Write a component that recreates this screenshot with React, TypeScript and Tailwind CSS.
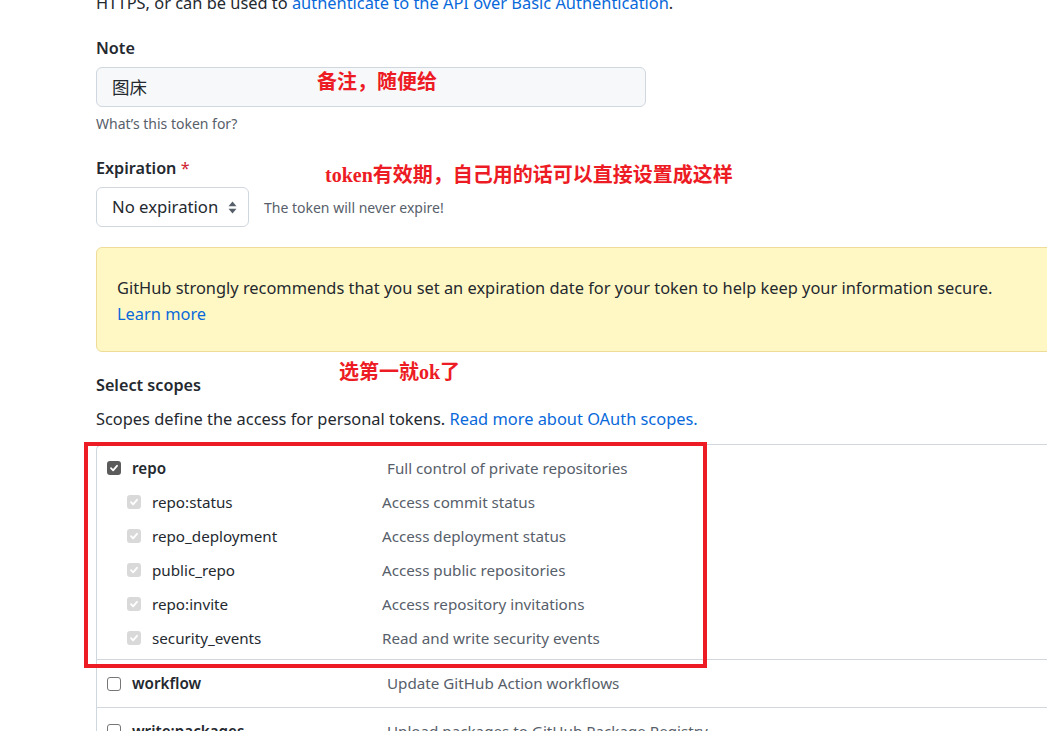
import React from "react";

const sans = { fontFamily: '"Noto Sans", "Noto Sans CJK SC", sans-serif' };

function Check({ kind }: { kind: "on" | "dim" | "off" }) {
  if (kind === "off") {
    return <span className="h-[14px] w-[14px] shrink-0 rounded-[3px] border border-[#767676] bg-white" />;
  }
  return (
    <span
      className={
        "flex h-[14px] w-[14px] shrink-0 items-center justify-center rounded-[3px] " +
        (kind === "on" ? "bg-[#5b5b5b]" : "bg-[#d9d9d9]")
      }
    >
      <svg width="10" height="10" viewBox="0 0 10 10" fill="none">
        <path d="M2 5.2 4.1 7.3 8 2.8" stroke="white" strokeWidth="1.8" strokeLinecap="round" strokeLinejoin="round" />
      </svg>
    </span>
  );
}

const subScopes = [
  ["repo:status", "Access commit status"],
  ["repo_deployment", "Access deployment status"],
  ["public_repo", "Access public repositories"],
  ["repo:invite", "Access repository invitations"],
  ["security_events", "Read and write security events"],
];

function Note({ children, className }: { children: React.ReactNode; className: string }) {
  return (
    <div
      className={"absolute whitespace-nowrap text-[20px] font-bold leading-[20px] text-[#ed1c24] " + className}
      style={{ fontFamily: '"Liberation Serif", "Noto Sans CJK SC", serif' }}
    >
      {children}
    </div>
  );
}

export default function App() {
  return (
    <div className="relative h-[731px] w-[1047px] overflow-hidden bg-white text-[#24292f]" style={sans}>
      <div className="w-[1120px] pl-[96px]">
        <p className="-mt-[9px] text-[16.4px] leading-[24px]">
          HTTPS, or can be used to{" "}
          <a className="text-[#0969da]">authenticate to the API over Basic Authentication</a>.
        </p>

        <div className="mt-[21px] text-[16.2px] font-semibold leading-[24px]">Note</div>
        <div className="mt-[7px] flex h-[40px] w-[550px] items-center rounded-md border border-[#d0d7de] bg-[#f6f8fa] px-[15px] text-[17.5px]">
          图床
        </div>
        <div className="mt-[8px] text-[14px] leading-[18px] text-[#57606a]">What’s this token for?</div>

        <div className="mt-[23px] text-[16.2px] font-semibold leading-[24px]">
          Expiration <span className="font-normal text-[#cf222e]">*</span>
        </div>
        <div className="mt-[7px] flex items-center gap-[15px]">
          <div className="flex h-[40px] w-[153px] items-center justify-between rounded-md border border-[#d0d7de] bg-white pl-[15px] pr-[11px] text-[16.7px]">
            <span>No expiration</span>
            <svg width="9" height="13" viewBox="0 0 9 13">
              <path d="M4.5 0.5 8.5 5.3H0.5Z" fill="#57606a" />
              <path d="M4.5 12.5 0.5 7.7H8.5Z" fill="#57606a" />
            </svg>
          </div>
          <span className="text-[14px] text-[#57606a]">The token will never expire!</span>
        </div>

        <div className="mt-[20px] h-[105px] rounded-md border border-[#eedc98] bg-[#fff8c5] pl-[20px] pt-[27px] text-[16.4px] leading-[26px]">
          <p>GitHub strongly recommends that you set an expiration date for your token to help keep your information secure.</p>
          <a className="text-[#0969da]">Learn more</a>
        </div>

        <div className="mt-[21px] text-[16.2px] font-semibold leading-[24px]">Select scopes</div>
        <p className="mt-[10px] text-[16.4px] leading-[24px]">
          Scopes define the access for personal tokens.{" "}
          <a className="text-[#0969da]">Read more about OAuth scopes.</a>
        </p>

        <div className="mt-[13px] rounded-tl-md border-l border-t border-[#d0d7de] text-[15.2px]">
          <div className="border-b border-[#d0d7de] pb-[4px] pl-[10px] pt-[6px]">
            <div className="flex h-[34px] items-center">
              <Check kind="on" />
              <span className="ml-[11px] w-[255px] font-semibold">repo</span>
              <span className="text-[#57606a]">Full control of private repositories</span>
            </div>
            {subScopes.map(([name, desc]) => (
              <div key={name} className="flex h-[34px] items-center pl-[20px]">
                <Check kind="dim" />
                <span className="ml-[11px] w-[230px]">{name}</span>
                <span className="text-[#57606a]">{desc}</span>
              </div>
            ))}
          </div>
          <div className="flex h-[48px] items-center border-b border-[#d0d7de] pl-[10px]">
            <Check kind="off" />
            <span className="ml-[11px] w-[255px] font-semibold">workflow</span>
            <span className="text-[#57606a]">Update GitHub Action workflows</span>
          </div>
          <div className="flex h-[46px] items-center pl-[10px]">
            <Check kind="off" />
            <span className="ml-[11px] w-[255px] font-semibold">write:packages</span>
            <span className="text-[#57606a]">Upload packages to GitHub Package Registry</span>
          </div>
        </div>
      </div>

      <div className="absolute left-[84px] top-[442px] h-[226px] w-[623px] border-4 border-[#ed1c24]" />
      <Note className="left-[317px] top-[72px]">备注，随便给</Note>
      <Note className="left-[325px] top-[165px]">token有效期，自己用的话可以直接设置成这样</Note>
      <Note className="left-[339px] top-[362px]">选第一就ok了</Note>
    </div>
  );
}
